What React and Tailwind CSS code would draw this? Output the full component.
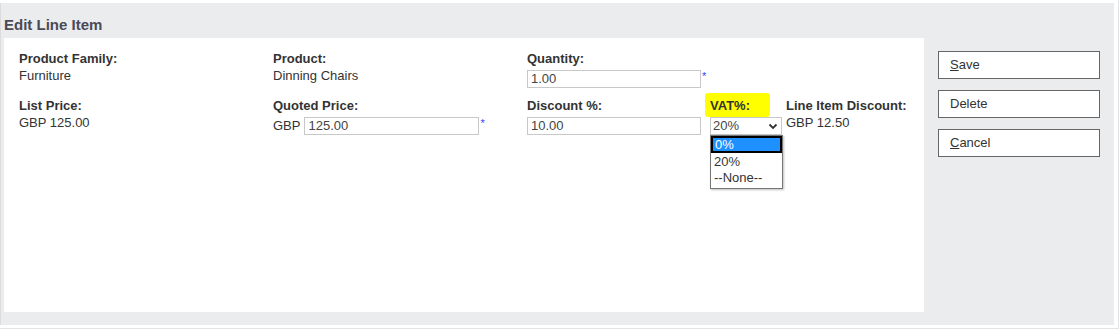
import React from "react";

function Label({ children }) {
  return <div className="font-bold text-[13px] leading-[15px] text-[#333]">{children}</div>;
}

function TextBox({ value, w }) {
  return (
    <div className={`h-[18px] border border-[#c8c8c8] bg-white px-[3px] text-[13px] leading-[16px] text-[#444] ${w}`}>
      {value}
    </div>
  );
}

function Req() {
  return <span className="text-[#3b3bff] text-[11px] leading-none ml-[1px] self-start mt-[1px]">*</span>;
}

function App() {
  return (
    <div
      className="w-[1119px] h-[329px] bg-white border-r border-b border-[#e4e4e4] pt-[3px]"
      style={{ fontFamily: '"Liberation Sans", Arial, sans-serif' }}
    >
      <div className="w-[1114px] h-[322px] bg-[#ebecee] border-l border-[#dcdcdc] flex flex-col">
        <div className="h-[35px] pl-[3px] flex items-center pt-[10px] font-bold text-[15px] text-[#4a4a55]">
          Edit Line Item
        </div>
        <div className="flex flex-1">
          <div className="ml-[3px] w-[920px] h-[274px] bg-white pl-[15px] pt-[13px] relative">
            {/* row 1 */}
            <div className="flex h-[47px]">
              <div className="w-[254px]">
                <Label>Product Family:</Label>
                <div className="text-[13px] leading-[15px] text-[#333] mt-[2px]">Furniture</div>
              </div>
              <div className="w-[254px]">
                <Label>Product:</Label>
                <div className="text-[13px] leading-[15px] text-[#333] mt-[2px]">Dinning Chairs</div>
              </div>
              <div className="w-[260px]">
                <Label>Quantity:</Label>
                <div className="flex mt-[4px]">
                  <TextBox value="1.00" w="w-[174px]" />
                  <Req />
                </div>
              </div>
            </div>
            {/* row 2 */}
            <div className="flex">
              <div className="w-[254px]">
                <Label>List Price:</Label>
                <div className="text-[13px] leading-[15px] text-[#333] mt-[2px]">GBP 125.00</div>
              </div>
              <div className="w-[254px]">
                <Label>Quoted Price:</Label>
                <div className="flex items-start mt-[4px]">
                  <span className="text-[13px] leading-[18px] text-[#333] mr-[4px]">GBP</span>
                  <TextBox value="125.00" w="w-[175px]" />
                  <Req />
                </div>
              </div>
              <div className="w-[183px]">
                <Label>Discount %:</Label>
                <div className="mt-[4px]">
                  <TextBox value="10.00" w="w-[174px]" />
                </div>
              </div>
              <div className="w-[76px] relative">
                <span className="absolute left-[-5px] top-[-5px] w-[65px] h-[24px] bg-[#ffff00] rounded-[3px] blur-[0.6px]" />
                <div className="relative">
                  <Label>VAT%:</Label>
                </div>
                <div className="relative mt-[4px] w-[72px] h-[18px] border border-[#c8c8c8] bg-white flex items-center justify-between pl-[2px] pr-[3px]">
                  <span className="text-[13px] leading-[16px] text-[#444]">20%</span>
                  <svg width="10" height="7" viewBox="0 0 10 7">
                    <path d="M1.5 1.5 L5 5 L8.5 1.5" stroke="#333" strokeWidth="1.8" fill="none" />
                  </svg>
                </div>
                <div className="absolute left-0 top-[37px] w-[73px] border border-[#767676] bg-white shadow-[1px_1px_2px_rgba(0,0,0,0.25)] z-10">
                  <div className="h-[17px] bg-[#1e90ff] border-2 border-black text-white text-[13px] leading-[13px] pl-[2px]">0%</div>
                  <div className="h-[17px] text-[13px] leading-[17px] text-[#333] pl-[3px]">20%</div>
                  <div className="h-[18px] text-[13px] leading-[16px] text-[#333] pl-[3px]">--None--</div>
                </div>
              </div>
              <div>
                <Label>Line Item Discount:</Label>
                <div className="text-[13px] leading-[15px] text-[#333] mt-[2px]">GBP 12.50</div>
              </div>
            </div>
          </div>
          <div className="flex flex-col gap-[11px] pl-[14px] pt-[13px]">
            <button className="w-[162px] h-[28px] border border-[#666] bg-white text-left pl-[11px] text-[13px] text-[#333]">
              <span className="underline">S</span>ave
            </button>
            <button className="w-[162px] h-[28px] border border-[#666] bg-white text-left pl-[11px] text-[13px] text-[#333]">
              Delete
            </button>
            <button className="w-[162px] h-[28px] border border-[#666] bg-white text-left pl-[11px] text-[13px] text-[#333]">
              <span className="underline">C</span>ancel
            </button>
          </div>
        </div>
      </div>
    </div>
  );
}

export default App;
